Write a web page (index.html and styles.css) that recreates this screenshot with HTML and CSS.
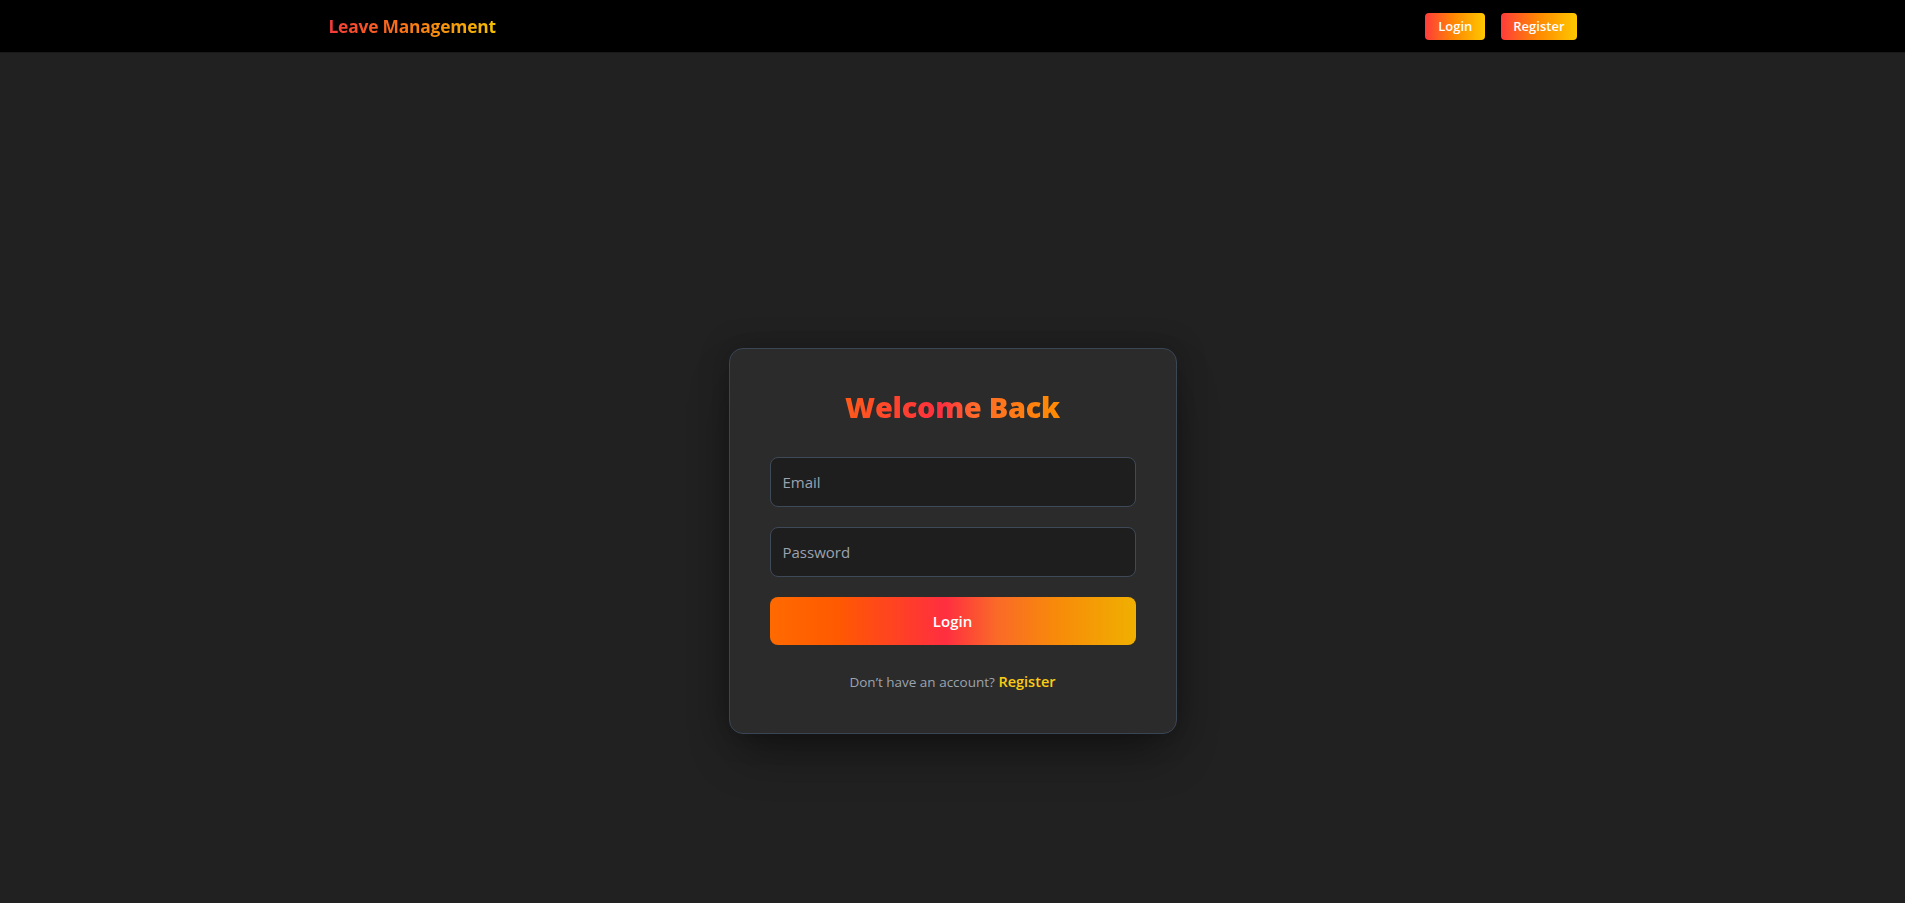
FILE: index.html
```html
<!DOCTYPE html>
<html lang="en">
<head>
<meta charset="utf-8">
<title>Leave Management</title>
<link rel="stylesheet" href="styles.css">
</head>
<body>
<nav class="navbar">
  <div class="nav-inner">
    <a class="brand" href="#">Leave Management</a>
    <div class="nav-actions">
      <a class="nav-btn" href="#">Login</a>
      <a class="nav-btn" href="#">Register</a>
    </div>
  </div>
</nav>
<main class="main">
  <div class="card">
    <h1 class="title">Welcome Back</h1>
    <form class="form">
      <input class="field" type="email" placeholder="Email">
      <input class="field" type="password" placeholder="Password">
      <button class="submit" type="button">Login</button>
    </form>
    <p class="footer-text">Don’t have an account? <a class="link" href="#">Register</a></p>
  </div>
</main>
</body>
</html>
```
FILE: styles.css
```css
* { box-sizing: border-box; }
html, body { margin: 0; padding: 0; }
body {
  background: #212121;
  font-family: "Open Sans", "Noto Sans", sans-serif;
  color: #fff;
  min-height: 100vh;
}
.navbar {
  background: #000;
  height: 52px;
  box-shadow: 0 1px 0 #1a1a1a;
}
.nav-inner {
  width: 1280px;
  margin: 0 auto;
  height: 100%;
  padding: 0 16px;
  display: flex;
  align-items: center;
  justify-content: space-between;
}
.brand {
  font-size: 17.4px;
  font-weight: 700;
  text-decoration: none;
  background: linear-gradient(to right, #f43a3a, #f97316 45%, #f5c000);
  -webkit-background-clip: text;
  background-clip: text;
  color: transparent;
  letter-spacing: -0.2px;
}
.nav-actions { display: flex; gap: 16px; }
.nav-btn {
  display: block;
  height: 27px;
  line-height: 27px;
  padding: 0 12px;
  border-radius: 4px;
  font-size: 13px;
  font-weight: 600;
  color: #fff;
  text-decoration: none;
  background: linear-gradient(to right, #ff3b3b, #ff8a00 50%, #ffc800);
}
.nav-btn:first-child { padding: 0 13px; }
.main {
  display: flex;
  justify-content: center;
  padding-top: 296px;
}
.card {
  width: 448px;
  background: #2b2b2b;
  border: 1px solid #3a4556;
  border-radius: 14px;
  padding: 40px;
  box-shadow: 0 25px 50px -12px rgba(0, 0, 0, 0.45), 0 0 30px rgba(0,0,0,0.25);
}
.title {
  margin: 0 0 32px;
  text-align: center;
  font-size: 29px;
  line-height: 36px;
  font-weight: 800;
  letter-spacing: -0.3px;
  background: linear-gradient(to right, #ff5a1a, #ff2f3f 45%, #ff6a2a 60%, #ff8c00);
  -webkit-background-clip: text;
  background-clip: text;
  color: transparent;
  width: max-content;
  margin-left: auto;
  margin-right: auto;
}
.form { display: flex; flex-direction: column; gap: 20px; }
.field {
  display: block;
  width: 100%;
  height: 50px;
  padding: 0 12px;
  background: #1e1e1e;
  border: 1px solid #3f4a59;
  border-radius: 8px;
  color: #fff;
  font-family: inherit;
  font-size: 15px;
  outline: none;
}
.field::placeholder { color: #9ca3af; }
.submit {
  height: 48px;
  width: 100%;
  border: 0;
  border-radius: 8px;
  font-family: inherit;
  font-size: 15px;
  font-weight: 600;
  color: #fff;
  cursor: pointer;
  background: linear-gradient(to right, #ff6a00 0%, #ff5a00 18%, #ff2e40 48%, #fa6a28 62%, #f88a0a 78%, #f0b000 100%);
}
.footer-text {
  margin: 26px 0 0;
  text-align: center;
  font-size: 13.5px;
  line-height: 22px;
  color: #9ca3af;
}
.link {
  color: #facc15;
  font-weight: 600;
  font-size: 14.5px;
  text-decoration: none;
}
```
